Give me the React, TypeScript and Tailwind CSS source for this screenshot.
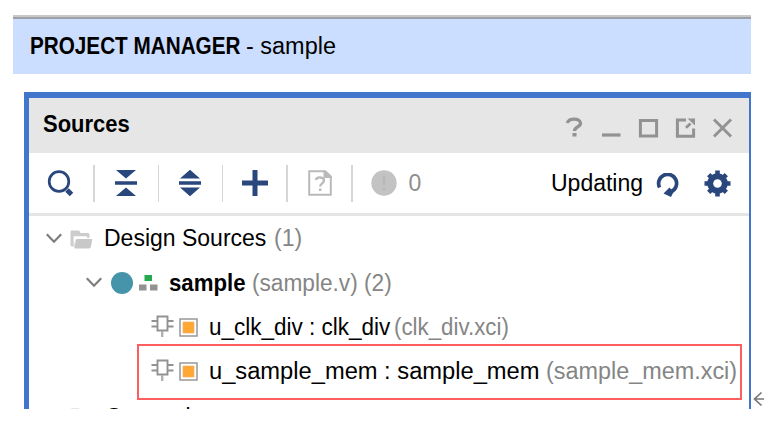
import type { ReactNode } from "react";

function Text({ className, children }: { className: string; children: ReactNode }) {
  return <span className={`block shrink-0 origin-left whitespace-pre ${className}`}>{children}</span>;
}

function Chevron() {
  return (
    <svg className="block h-3 w-4 shrink-0" viewBox="0 0 16 12" fill="none" stroke="#7d7d7d" strokeWidth="2.2">
      <path d="M0.8 2.2 8 9.7 15.2 2.2" />
    </svg>
  );
}

function Folder() {
  return (
    <svg className="block h-[19px] w-[23px] shrink-0" viewBox="0 0 23 19" fill="#c8c8c8">
      <path d="M0.5 1.5Q0.5.5 2 .5H8.5Q10 .5 10.5 3H18Q19.5 3 19.5 4.5V7.8H6.5L4 16.5H2Q.5 16.5.5 15Z" fill="#cdcdcd" />
      <path d="M3.6 6.2H17V8.5H6.2L3.6 16Z" fill="#fff" />
      <path d="M6.8 9H21.5Q22.6 9 22.2 10L20.8 17Q20.4 18.4 19 18.4H5.2Q4 18.4 4.4 17L6 10Q6.2 9 6.8 9Z" />
    </svg>
  );
}

function Chip() {
  return (
    <svg className="block h-[23px] w-[23px] shrink-0" viewBox="0 0 23 23" fill="none" stroke="#929292" strokeWidth="1.9">
      <path d="M6.5 1.5H16.5V15.5H6.5ZM.5 6H6.5M.5 11.5H6.5M16.5 6H22.5M16.5 11.5H22.5" />
      <path d="M11.2 16V22" stroke="#b0b0b0" strokeWidth="2.4" />
    </svg>
  );
}

function IpCore() {
  return (
    <svg className="block h-[19px] w-[19px] shrink-0" viewBox="0 0 19 19">
      <path d="M1 1H18V18H1Z" fill="#fff" stroke="#989898" strokeWidth="1.5" />
      <path d="M4 4H15V15H4Z" fill="#ffa733" stroke="#eeb069" strokeWidth=".7" />
    </svg>
  );
}

function Divider() {
  return <div className="h-[37px] w-[1.5px] shrink-0 bg-[#d6d6d6]" />;
}

function InstanceIcons() {
  return (
    <div className="flex w-[58px] shrink-0 items-center">
      <div className="-mt-[1px]"><Chip /></div>
      <div className="ml-[4.5px] mt-[1px]"><IpCore /></div>
    </div>
  );
}

function Header() {
  return (
    <div className="flex h-[55px] shrink-0 items-center bg-[#e6e6e6] pl-[14px]">
      <Text className="-mt-[4px] w-[87px] scale-x-[0.955] font-bold">Sources</Text>
      <svg className="mt-[4px] ml-auto mr-[16px] block h-6 w-[168px] shrink-0" viewBox="0 0 168 24" fill="none" stroke="#929292" strokeWidth="3">
        <path d="M2.5 7.2C3 1.5 15.5 1.8 15.5 7.2C15.5 11 9.5 10.8 9.5 15" strokeWidth="3.3" />
        <path d="M9.5 17V20.5" strokeWidth="4" />
        <path d="M37 19H55.5" strokeWidth="3.2" />
        <path d="M75.4 4.4H91.6V20H75.4Z" />
        <path d="M121 4H112.4V20.3H128.6V12.5" />
        <path d="M121 11.8 125.5 7.5" strokeWidth="2.8" />
        <path d="M122.5 2.6H130V9.5Z" fill="#929292" stroke="none" />
        <path d="M149 3.5 166 20.5M166 3.5 149 20.5" />
      </svg>
    </div>
  );
}

function Toolbar() {
  return (
    <div className="flex h-[63px] shrink-0 items-center border-b-[3px] border-[#e5e5e5]">
      <svg className="ml-[18px] block h-[27px] w-[27px] shrink-0" viewBox="0 0 27 27" fill="none" stroke="#29477d">
        <circle cx="12" cy="11.5" r="9.8" strokeWidth="2.7" />
        <path d="M20 20 24.5 24.5" strokeWidth="5" />
      </svg>
      <div className="ml-[19px]"><Divider /></div>
      <svg className="ml-[19.5px] block h-7 w-6 shrink-0" viewBox="0 0 24 28" fill="#29477d">
        <path d="M2 1H22L12 9.5ZM1 12.3H23V15.7H1ZM2 27H22L12 18.5Z" />
      </svg>
      <div className="ml-[19.5px]"><Divider /></div>
      <svg className="ml-[19px] block h-7 w-6 shrink-0" viewBox="0 0 24 28" fill="#29477d">
        <path d="M12 .7 22 9.5H2ZM1 12.3H23V15.7H1ZM2 18.5H22L12 27.3Z" />
      </svg>
      <div className="ml-[19.5px]"><Divider /></div>
      <svg className="ml-[18.5px] block h-[26px] w-[26px] shrink-0" viewBox="0 0 26 26" fill="none" stroke="#29477d" strokeWidth="5">
        <path d="M13 0V26M0 13H26" />
      </svg>
      <div className="ml-[18.5px]"><Divider /></div>
      <svg className="ml-[20px] block h-[26px] w-6 shrink-0" viewBox="0 0 24 26" fill="none" stroke="#bababa" strokeWidth="2">
        <path d="M1.2 1.2H17.2L22.8 6.5V24.8H1.2Z" />
        <path d="M16.5 1.5V7H22.5Z" fill="#bababa" />
        <path d="M8 10C8.5 6.2 16 6.8 16 10.5C16 13.5 12.2 13.2 12.2 16.5M12.2 18.5V21" strokeWidth="2.4" />
      </svg>
      <div className="ml-[19.5px]"><Divider /></div>
      <svg className="ml-[18px] block h-[26px] w-[26px] shrink-0" viewBox="0 0 26 26">
        <circle cx="13" cy="13" r="12.7" fill="#c3c3c3" />
        <path d="M13 6V15M13 17.5V20" stroke="#b9b9b9" strokeWidth="2.8" />
      </svg>
      <Text className="ml-[12px] w-[13px] text-[#8e8e8e]">0</Text>
      <Text className="ml-auto w-[92px]">Updating</Text>
      <svg className="ml-[13px] mt-[3px] block h-6 w-6 shrink-0" viewBox="0 0 24 24" fill="none" stroke="#29477d" strokeWidth="3.7">
        <path d="M3.6 14.5A9 9 0 1 1 15.5 18.5" />
        <path d="M7.5 20.5 13.5 14.5 17.5 19 15 24Z" fill="#29477d" stroke="none" />
      </svg>
      <svg className="ml-[24px] mr-[18px] block h-[27px] w-[27px] shrink-0" viewBox="-13.5 -13.5 27 27" fill="#29477d">
        <g stroke="#29477d" strokeWidth="4.6">
          <path d="M0-13V13M-13 0H13" />
          <path d="M-8.8-8.8 8.8 8.8M-8.8 8.8 8.8-8.8" />
        </g>
        <circle r="10.3" />
        <circle r="4.3" fill="#fff" />
      </svg>
    </div>
  );
}

function SourceTree() {
  return (
    <div className="min-h-0 flex-1 overflow-hidden">
      <div className="flex h-[44.3px] items-center pl-[17px]">
        <Chevron />
        <div className="ml-[8px] mt-[2px]"><Folder /></div>
        <Text className="ml-[11px] w-[170px]">Design Sources</Text>
        <Text className="text-[#858585]">(1)</Text>
      </div>
      <div className="flex h-[44.3px] items-center pl-[57px]">
        <Chevron />
        <div className="ml-[9px] mt-[1px] h-[22px] w-[22px] shrink-0 rounded-full bg-[#4694aa]" />
        <svg className="ml-[6px] mt-[1px] block h-4 w-[19px] shrink-0" viewBox="0 0 19 16">
          <path d="M5.5 0H13V6H5.5Z" fill="#24aa4d" />
          <path d="M0 9.5H7.5V15.5H0ZM11 9.5H18.5V15.5H11Z" fill="#929292" />
        </svg>
        <Text className="ml-[11px] mt-[1px] w-[83px] scale-x-[0.965] font-bold">sample</Text>
        <Text className="mt-[1px] scale-x-[0.985] text-[#858585]">(sample.v) (2)</Text>
      </div>
      <div className="flex h-[44.3px] items-center pl-[122px]">
        <InstanceIcons />
        <Text className="w-[185px] scale-x-[0.978]">u_clk_div : clk_div</Text>
        <Text className="scale-x-[0.97] text-[#858585]">(clk_div.xci)</Text>
      </div>
      <div className="flex h-[44.3px] items-center pl-[122px]">
        <InstanceIcons />
        <Text className="w-[336.5px] scale-x-[1.03]">u_sample_mem : sample_mem</Text>
        <Text className="scale-x-[1.017] text-[#858585]">(sample_mem.xci)</Text>
      </div>
      <div className="flex h-[46px] items-center pl-[41px]">
        <div className="mt-[2px]"><Folder /></div>
        <Text className="ml-[12px] mt-[2px]">Constraints</Text>
      </div>
    </div>
  );
}

export default function App() {
  return (
    <div className="relative flex h-[425px] w-[764px] flex-col overflow-hidden bg-white pl-[13px] pt-[15px] font-['Liberation_Sans',Arial,sans-serif] text-[23px] leading-[28px] text-black">
      <div className="h-[2px] w-[738px] shrink-0 bg-[#c9c9c9]" />
      <div className="flex h-[57px] w-[738px] shrink-0 items-center border-t-2 border-t-[#9da0a6] bg-[#cbdeff] pb-[2px] pl-[17px]">
        <Text className="w-[216px] scale-x-[0.9] font-bold">PROJECT MANAGER</Text>
        <Text className="scale-x-[1.02]">- sample</Text>
      </div>
      <div className="ml-[11px] mt-[18px] flex h-[317px] w-[727px] shrink-0 flex-col border-l-[5.5px] border-r-2 border-t-[6px] border-[#4276cc]">
        <Header />
        <Toolbar />
        <SourceTree />
      </div>
      <div className="absolute left-[137px] top-[344px] h-[56px] w-[605px] border-2 border-[#ff5e5e]" />
      <svg className="absolute left-[753px] top-[391px] block h-4 w-[11px]" viewBox="0 0 11 16" fill="none" stroke="#777" strokeWidth="1.7">
        <path d="M8.5 1.5 1.5 8 8.5 14.5M1.5 8H11" />
      </svg>
    </div>
  );
}
